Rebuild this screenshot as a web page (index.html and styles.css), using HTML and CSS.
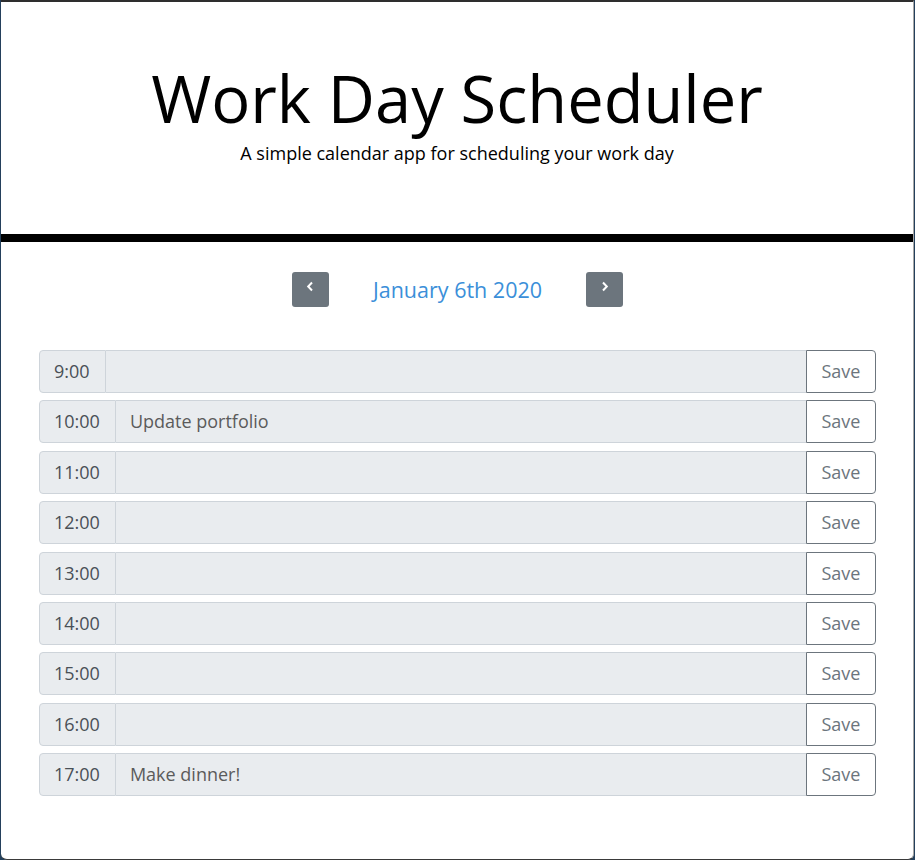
FILE: index.html
```html
<!DOCTYPE html>
<html lang="en">
<head>
<meta charset="utf-8">
<title>Work Day Scheduler</title>
<link rel="stylesheet" href="styles.css">
</head>
<body>
<div class="frame">
  <header class="jumbotron">
    <h1 class="title">Work Day Scheduler</h1>
    <p class="lead">A simple calendar app for scheduling your work day</p>
  </header>
  <main class="container">
    <nav class="date-nav">
      <button class="nav-btn" aria-label="Previous day">
        <svg width="8" height="11" viewBox="0 0 8 11"><path d="M6 1.5 L2.2 5.5 L6 9.5" fill="none" stroke="#fff" stroke-width="2"/></svg>
      </button>
      <span class="current-date">January 6th 2020</span>
      <button class="nav-btn" aria-label="Next day">
        <svg width="8" height="11" viewBox="0 0 8 11"><path d="M2 1.5 L5.8 5.5 L2 9.5" fill="none" stroke="#fff" stroke-width="2"/></svg>
      </button>
    </nav>
    <div class="schedule">
      <div class="time-block"><span class="hour">9:00</span><div class="desc"></div><button class="save">Save</button></div>
      <div class="time-block"><span class="hour">10:00</span><div class="desc">Update portfolio</div><button class="save">Save</button></div>
      <div class="time-block"><span class="hour">11:00</span><div class="desc"></div><button class="save">Save</button></div>
      <div class="time-block"><span class="hour">12:00</span><div class="desc"></div><button class="save">Save</button></div>
      <div class="time-block"><span class="hour">13:00</span><div class="desc"></div><button class="save">Save</button></div>
      <div class="time-block"><span class="hour">14:00</span><div class="desc"></div><button class="save">Save</button></div>
      <div class="time-block"><span class="hour">15:00</span><div class="desc"></div><button class="save">Save</button></div>
      <div class="time-block"><span class="hour">16:00</span><div class="desc"></div><button class="save">Save</button></div>
      <div class="time-block"><span class="hour">17:00</span><div class="desc">Make dinner!</div><button class="save">Save</button></div>
    </div>
  </main>
</div>
</body>
</html>
```
FILE: styles.css
```css
html, body {
  margin: 0;
  padding: 0;
  height: 100%;
}
body {
  background: #24405c;
  font-family: "Open Sans", "DejaVu Sans", sans-serif;
  color: #212529;
}
.frame {
  box-sizing: border-box;
  height: 860px;
  margin: 0 1px 0 1px;
  border-top: 2px solid #2e2e2e;
  border-right: 1px solid #a8a8a8;
  border-bottom: 1px solid #3a3a3a;
  background: #fff;
  border-radius: 0 0 6px 6px;
  overflow: hidden;
}
.jumbotron {
  text-align: center;
  padding: 57px 0 0 0;
  height: 240px;
  box-sizing: border-box;
  border-bottom: 8px solid #000;
}
.title {
  margin: 0;
  font-size: 65px;
  font-weight: 400;
  line-height: 1.2;
  color: #000;
}
.lead {
  margin: 6px 0 0 0;
  font-size: 18px;
  line-height: 1.2;
  color: #000;
}
.container {
  padding: 30px 37px 0 38px;
}
.date-nav {
  display: flex;
  justify-content: center;
  align-items: center;
  gap: 44px;
  margin-bottom: 43px;
}
.nav-btn {
  width: 37px;
  height: 35px;
  border: none;
  border-radius: 3px;
  background: #6c757d;
  padding: 0 0 6px 0;
  display: flex;
  align-items: center;
  justify-content: center;
}
.current-date {
  font-size: 21.5px;
  color: #3b8fd9;
}
.schedule {
  display: flex;
  flex-direction: column;
  gap: 7.4px;
}
.time-block {
  display: flex;
  height: 43px;
  font-size: 18px;
}
.hour {
  display: flex;
  align-items: center;
  padding: 0 15px 1px 14px;
  background: #e9ecef;
  border: 1px solid #ced4da;
  border-radius: 4px 0 0 4px;
  color: #495057;
}
.desc {
  flex: 1;
  display: flex;
  align-items: center;
  padding: 0 14px 1px 14px;
  background: #e9ecef;
  border-top: 1px solid #ced4da;
  border-bottom: 1px solid #ced4da;
  color: #5b5b5b;
}
.save {
  width: 70px;
  font-family: inherit;
  font-size: 18px;
  background: #fff;
  color: #6c757d;
  border: 1px solid #6c757d;
  border-radius: 0 4px 4px 0;
  padding: 0 0 1px 0;
}
```
